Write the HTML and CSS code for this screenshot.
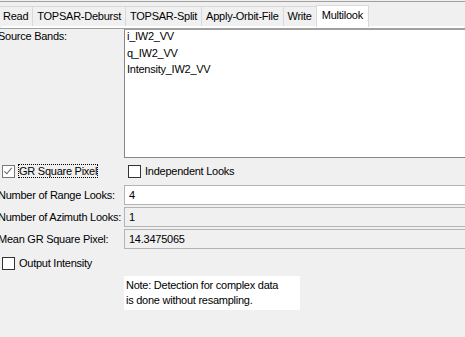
FILE: index.html
```html
<!DOCTYPE html>
<html lang="en">
<head>
    <meta charset="UTF-8">
    <title>Multilook</title>
    <link rel="stylesheet" href="styles.css">
</head>
<body>
    <div class="window">
        <div class="tabs">
            <div class="tab">Read</div>
            <div class="tab">TOPSAR-Deburst</div>
            <div class="tab">TOPSAR-Split</div>
            <div class="tab">Apply-Orbit-File</div>
            <div class="tab">Write</div>
            <div class="tab active">Multilook</div>
        </div>

        <div class="panel">
            <div class="row bands">
                <div class="label">Source Bands:</div>
                <div class="listbox">
                    <div>i_IW2_VV</div>
                    <div>q_IW2_VV</div>
                    <div>Intensity_IW2_VV</div>
                </div>
            </div>

            <div class="row checks">
                <label class="check"><span class="box checked"></span><span class="focus">GR Square Pixel</span></label>
                <label class="check"><span class="box"></span><span>Independent Looks</span></label>
            </div>

            <div class="row field-row first">
                <div class="label">Number of Range Looks:</div>
                <div class="field">4</div>
            </div>
            <div class="row field-row">
                <div class="label">Number of Azimuth Looks:</div>
                <div class="field disabled">1</div>
            </div>
            <div class="row field-row">
                <div class="label">Mean GR Square Pixel:</div>
                <div class="field disabled">14.3475065</div>
            </div>

            <div class="row output">
                <label class="check"><span class="box"></span><span>Output Intensity</span></label>
            </div>

            <div class="row">
                <div class="label"></div>
                <div class="note">Note: Detection for complex data<br>is done without resampling.</div>
            </div>
        </div>
    </div>
</body>
</html>
```

FILE: styles.css
```css
html, body {
    margin: 0;
    padding: 0;
    overflow: hidden;
}
body {
    font-family: "Liberation Sans", Arial, sans-serif;
    font-size: 11px;
    letter-spacing: -0.25px;
    color: #000;
    background-color: #f0f0f0;
    width: 465px;
    height: 337px;
}
.window {
    width: 465px;
    border-top: 1px solid #a0a0a0;
    margin-top: 1px;
    overflow: hidden;
}

/* tabs */
.tabs {
    display: flex;
    align-items: flex-end;
    height: 24px;
}
.tab {
    height: 20px;
    line-height: 19px;
    padding: 0 4px;
    margin-left: -1px;
    background: #f0f0f0;
    border: 1px solid #d9d9d9;
    border-bottom: none;
    box-sizing: border-box;
}
.tab:first-child {
    margin-left: -2px;
}
.tab.active {
    height: 22px;
    line-height: 18px;
    padding: 0 5px;
    background: #fff;
    position: relative;
    top: 1px;
}

/* panel under tabs */
.panel {
    border-top: 1px solid #a0a0a0;
    box-shadow: 0 -3px 0 -1px #fff;
    margin-top: 2px;
}
.row {
    display: flex;
    align-items: center;
    margin-left: -2px;
    margin-right: -20px;
}
.label {
    width: 126px;
    flex: none;
    white-space: nowrap;
}
.bands {
    align-items: flex-start;
}
.bands .label {
    padding-top: 1px;
    line-height: 13px;
}
.listbox {
    flex: 1;
    height: 127px;
    background: #fff;
    border: 1px solid #828790;
    border-top-color: #a0a0a0;
    padding: 0 2px;
    line-height: 13px;
}
.listbox div {
    margin-bottom: 3.5px;
}

/* checkboxes */
.checks {
    margin-top: 6px;
    height: 14px;
    margin-left: 2px;
}
.check {
    display: flex;
    align-items: center;
    gap: 4px;
    white-space: nowrap;
}
.checks .check:first-child {
    width: 126px;
}
.box {
    width: 11px;
    height: 11px;
    border: 1px solid #333;
    background: #fff;
    position: relative;
    flex: none;
}
.box.checked {
    border-color: #777;
}
.box.checked::after {
    content: "";
    position: absolute;
    left: 3px;
    top: 0;
    width: 3px;
    height: 7px;
    border: solid #666;
    border-width: 0 1.5px 1.5px 0;
    transform: rotate(40deg);
}
.focus {
    outline: 1px dotted #000;
    outline-offset: 0;
}

/* fields */
.field-row {
    margin-top: 2px;
}
.field-row.first {
    margin-top: 7px;
}
.field {
    flex: 1;
    height: 18px;
    line-height: 19px;
    border: 1px solid #b4b4b4;
    background: #fff;
    padding: 0 4px;
}
.field.disabled {
    background: #f0f0f0;
}

.output {
    margin-top: 7px;
    margin-left: 2px;
    height: 14px;
}
.note {
    margin-top: 6px;
    background: #fff;
    width: 174px;
    padding: 2px 0 2px 2px;
    line-height: 15px;
    white-space: nowrap;
}
```
